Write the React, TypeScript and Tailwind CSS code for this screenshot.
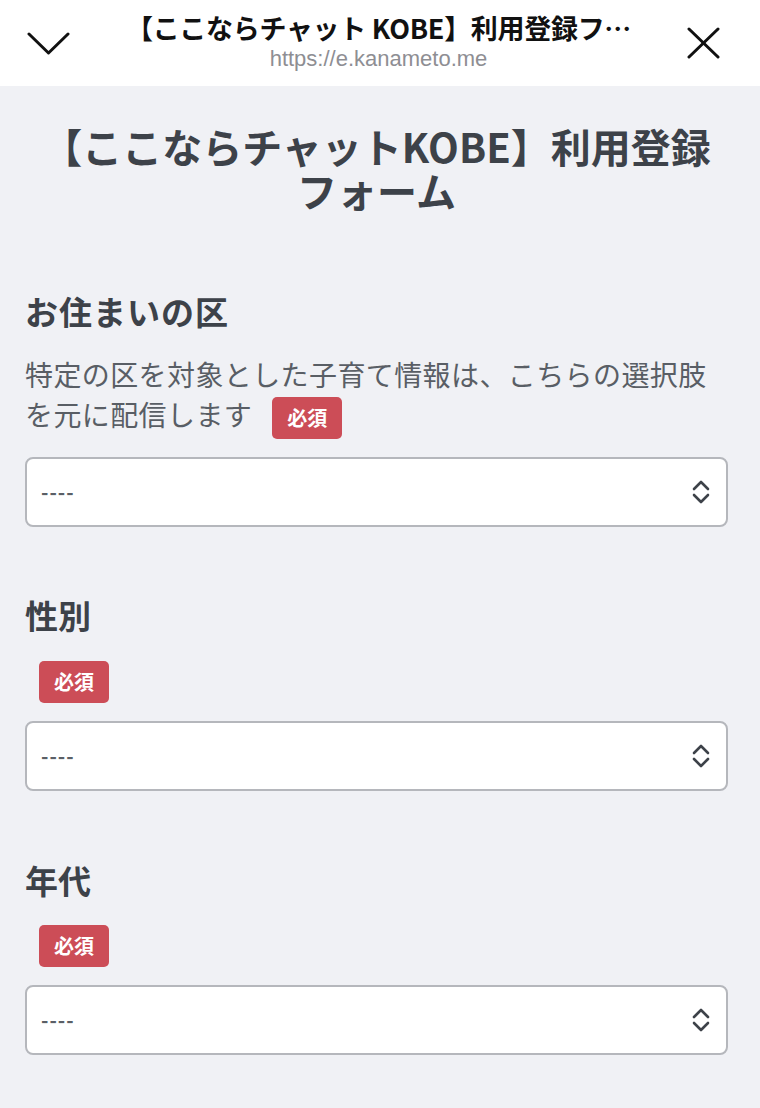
const jp = { fontFamily: '"Noto Sans CJK JP", "Noto Sans", sans-serif' };

const Required = ({ className = "" }: { className?: string }) => (
  <span
    className={`inline-flex h-[42px] w-[70px] items-center justify-center rounded-[5px] bg-[#cc4d57] text-[20px] font-bold text-white ${className}`}
  >
    必須
  </span>
);

const SelectBox = ({ className = "" }: { className?: string }) => (
  <div
    className={`flex h-[70px] items-center justify-between rounded-[8px] border-2 border-[#b5b7bc] bg-white pl-[14px] pr-[15px] ${className}`}
  >
    <span className="text-[20px] font-bold leading-none tracking-[1px] text-[#5a5f66]">----</span>
    <svg width="20" height="26" viewBox="0 0 20 26" fill="none" stroke="#3d4249" strokeWidth="2.6" strokeLinecap="round" strokeLinejoin="round">
      <path d="M3 10 L10 3 L17 10" />
      <path d="M3 16 L10 23 L17 16" />
    </svg>
  </div>
);

export default function App() {
  return (
    <div className="min-h-[1108px] w-full bg-[#f0f1f5]" style={jp}>
      {/* in-app browser bar */}
      <header className="flex h-[86px] items-center justify-between bg-white pl-[27px] pr-[40px]">
        <svg width="43" height="23" viewBox="0 0 43 23" fill="none" stroke="#111" strokeWidth="3" strokeLinecap="round" strokeLinejoin="round">
          <path d="M2 2 L21.5 21 L41 2" />
        </svg>
        <div className="flex flex-col items-center gap-[4px] pb-[2px]">
          <div className="text-[27px] font-bold leading-[30px] tracking-[-0.3px] text-[#111]">
            【ここならチャット KOBE】利用登録フ…
          </div>
          <div className="text-[22px] leading-[24px] text-[#8e8e93]" style={{ fontFamily: '"Liberation Sans", Arial, sans-serif' }}>
            https://e.kanameto.me
          </div>
        </div>
        <svg width="33" height="32" viewBox="0 0 33 32" fill="none" stroke="#111" strokeWidth="3" strokeLinecap="round">
          <path d="M2 2 L31 30" />
          <path d="M31 2 L2 30" />
        </svg>
      </header>

      <main className="pl-[25px] pr-[32px] pt-[38px] text-[#3d4249]">
        <h1 className="text-center text-[40px] font-bold leading-[44px]">
          <span className="block">【ここならチャットKOBE】利用登録</span>
          <span className="block">フォーム</span>
        </h1>

        <section className="mt-[79px]">
          <h2 className="text-[33px] font-bold leading-[40px] tracking-[1px]">お住まいの区</h2>
          <p className="mt-[23px] text-[28px] leading-[40px] tracking-[0.4px] text-[#595e65]">
            特定の区を対象とした子育て情報は、こちらの選択肢
            <br />
            を元に配信します
            <Required className="ml-[20px] align-middle tracking-normal" />
          </p>
          <SelectBox className="mt-[18px]" />
        </section>

        <section className="mt-[68px]">
          <h2 className="text-[33px] font-bold leading-[40px]">性別</h2>
          <Required className="ml-[14px] mt-[26px]" />
          <SelectBox className="mt-[18px]" />
        </section>

        <section className="mt-[69px] pb-[53px]">
          <h2 className="text-[33px] font-bold leading-[40px]">年代</h2>
          <Required className="ml-[14px] mt-[25px]" />
          <SelectBox className="mt-[18px]" />
        </section>
      </main>
    </div>
  );
}
